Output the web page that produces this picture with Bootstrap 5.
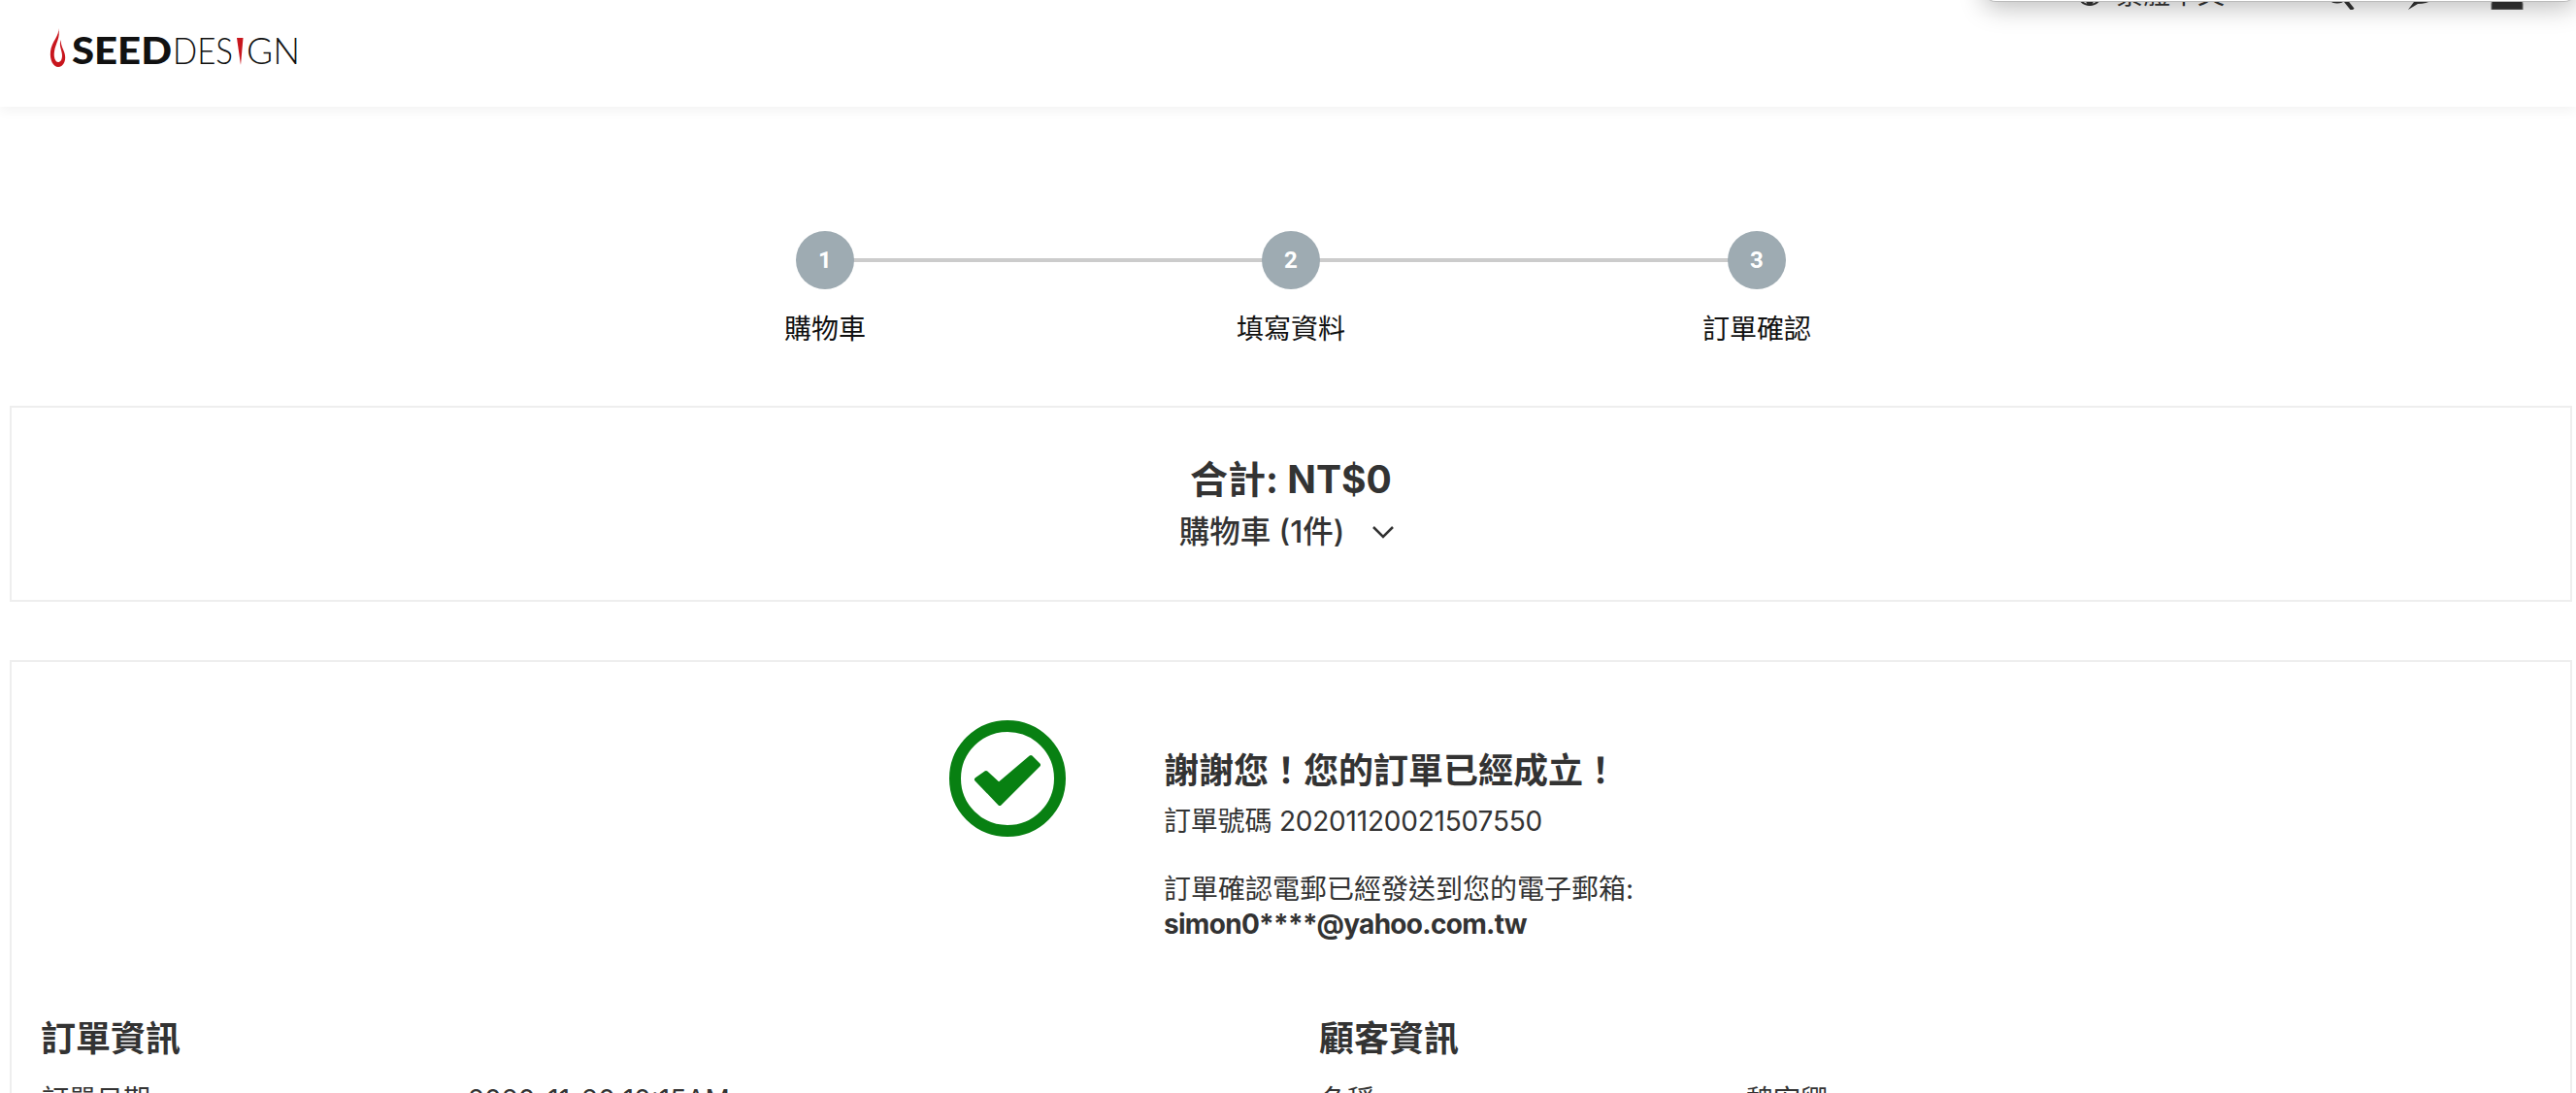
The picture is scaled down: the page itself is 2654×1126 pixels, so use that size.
<!DOCTYPE html>
<html lang="zh-Hant">
<head>
    <meta charset="UTF-8">
    <link href="https://cdn.jsdelivr.net/npm/bootstrap@5.3.3/dist/css/bootstrap.min.css" rel="stylesheet">
    <title>SeedDesign</title>
    <style>
        html, body { height: 1126px; overflow: hidden; }
        body { font-family: Inter, "Noto Sans CJK TC", sans-serif; color: #333; background: #fff; }
        .site-head { height: 110px; background: #fff; box-shadow: 0 4px 12px rgba(0,0,0,.05); position: relative; }
        .logo-wrap { padding: 26px 0 0 50px; }
        .overlay-bar { position: absolute; top: -40px; left: 2044px; right: 0; height: 42px; background: #fff; border-radius: 0 0 12px 12px; border-bottom: 1px solid #bbb; box-shadow: 0 6px 26px rgba(0,0,0,.26); }
        .head-tools { margin-top: -30px; height: 40px; font-size: 28px; line-height: 40px; color: #333; padding-right: 54px; }
        .tool-lang { margin: 0 103px -4px 0; }
        .tool-globe { margin: 0 15px 3px 0; }
        .tool-search { margin-right: 52px; }
        .tool-chat { margin-right: 53px; }
        .page-main { padding: 0 4px 0 10px; }
        .step-row { width: 1440px; margin: 128px auto 0; display: grid; grid-template-columns: repeat(3, 1fr); }
        .step-box { position: relative; }
        .step-line { position: absolute; top: 28px; left: 50%; width: 100%; height: 4px; background: #ccc; }
        .step-num { width: 60px; height: 60px; border-radius: 50%; background: #9eabb2; color: #fff; font-family: Roboto, sans-serif; font-weight: 700; font-size: 24px; position: relative; z-index: 1; }
        .step-label { margin-top: 21px; font-size: 28px; line-height: 40px; color: #111; white-space: nowrap; }
        .total-box { height: 202px; margin-top: 59px; padding-top: 51px; border: 2px solid #eee; }
        .total-amt { font-size: 39px; font-weight: 700; line-height: 46px; }
        .cart-toggle { margin-top: 11px; font-size: 31.500px; font-weight: 500; line-height: 40px; gap: 28px; padding-right: 8px; }
        .order-box { margin-top: 60px; border: 2px solid #eee; height: 700px; padding: 60px 0 0 31px; }
        .thanks-row { padding-left: 935px; gap: 102px; }
        .thanks-body { margin-top: 30px; }
        .thanks-title { font-size: 36px; font-weight: 700; line-height: 44px; margin-left: -1px; }
        .thanks-no { margin-top: 12px; font-size: 28px; line-height: 36px; letter-spacing: -.2px; margin-left: -1px; }
        .thanks-text { margin-top: 33px; font-size: 28px; line-height: 38px; margin-left: -1px; }
        .thanks-mail { font-size: 28px; line-height: 34px; font-weight: 700; letter-spacing: -.7px; margin-left: -1px; }
        .info-wrap { margin-top: 78px; }
        .info-col { width: 1317px; flex: none; }
        .info-title { font-size: 36px; font-weight: 700; line-height: 46px; margin: 0 0 0 -1px; color: #333; }
        .info-line { font-size: 28px; line-height: 40px; margin-top: 20px; }
        .info-key { width: 439px; flex: none; }
    </style>
</head>
<body>
    <header class="site-head d-flex justify-content-between align-items-start">
        <div class="logo-wrap">
            <svg class="d-block" width="262" height="58" viewBox="0 0 262 58" role="img" aria-label="SeedDesign">
                <path d="M10 3C12 10 3 17 2 27C1 36 5 43 10 43C15 43 18 37 17 31C16 25 12 21 13 15C10 20 14 26 14 31C14 36 12 38 10 38C7 38 5 33 6 27C7 19 13 12 10 3Z" fill="#c8161d"/>
                <text x="24" y="40" font-family="Lato, sans-serif" font-weight="900" font-size="38" fill="#111" textLength="103" lengthAdjust="spacingAndGlyphs">SEED</text>
                <text x="128" y="40" font-family="Lato, sans-serif" font-weight="300" font-size="38" fill="#111" textLength="62" lengthAdjust="spacingAndGlyphs">DES</text>
                <path d="M194 13H200.500L198 41Z" fill="#c8161d"/>
                <text x="204" y="40" font-family="Lato, sans-serif" font-weight="300" font-size="38" fill="#111" textLength="55" lengthAdjust="spacingAndGlyphs">GN</text>
            </svg>
        </div>
        <div class="head-tools d-flex align-items-end">
            <svg class="tool-globe" width="24" height="28" viewBox="0 0 24 28"><circle cx="12" cy="14" r="12" fill="none" stroke="#333" stroke-width="2"/><ellipse cx="12" cy="14" rx="5" ry="13" fill="#333"/></svg>
            <span class="tool-lang">繁體中文</span>
            <svg class="tool-search" width="32" height="36" viewBox="0 -5 32 36"><circle cx="13" cy="12" r="11" fill="none" stroke="#333" stroke-width="3"/><path d="M21 21L29 31" stroke="#333" stroke-width="4"/></svg>
            <svg class="tool-chat" width="34" height="36" viewBox="0 -4 34 36"><path d="M2 32L8 24C3 20 1 16 2 11C4 3 12 1 18 1C26 1 32 6 32 13C32 21 23 26 12 26Z" fill="#333"/></svg>
            <svg width="34" height="36" viewBox="0 -4 34 36"><path d="M1 32V26C1 21 8 19 17 19C26 19 33 21 33 26V32Z" fill="#333" stroke="#777" stroke-width="1"/></svg>
        </div>
        <div class="overlay-bar"></div>
    </header>

    <main class="page-main">
        <div class="step-row">
            <div class="step-box d-flex flex-column align-items-center">
                <div class="step-line"></div>
                <div class="step-num d-flex align-items-center justify-content-center">1</div>
                <div class="step-label">購物車</div>
            </div>
            <div class="step-box d-flex flex-column align-items-center">
                <div class="step-line"></div>
                <div class="step-num d-flex align-items-center justify-content-center">2</div>
                <div class="step-label">填寫資料</div>
            </div>
            <div class="step-box d-flex flex-column align-items-center">
                <div class="step-num d-flex align-items-center justify-content-center">3</div>
                <div class="step-label">訂單確認</div>
            </div>
        </div>

        <section class="total-box text-center">
            <div class="total-amt">合計: NT$0</div>
            <div class="cart-toggle d-flex justify-content-center align-items-center">
                <span>購物車 (1件)</span>
                <svg width="24" height="14" viewBox="0 0 24 14"><path d="M2 2L12 12L22 2" fill="none" stroke="#333" stroke-width="2.500"/></svg>
            </div>
        </section>

        <section class="order-box">
            <div class="thanks-row d-flex">
                <svg class="flex-shrink-0" width="120" height="120" viewBox="0 0 120 120">
                    <circle cx="60" cy="60" r="54" fill="none" stroke="#088012" stroke-width="12"/>
                    <path d="M38 54L51 66L84 38L92 46L52 86L28 61Z" fill="#088012" stroke="#088012" stroke-width="4" stroke-linejoin="round"/>
                </svg>
                <div class="thanks-body">
                    <div class="thanks-title">謝謝您！您的訂單已經成立！</div>
                    <div class="thanks-no">訂單號碼 20201120021507550</div>
                    <div class="thanks-text">訂單確認電郵已經發送到您的電子郵箱:</div>
                    <div class="thanks-mail">simon0****@yahoo.com.tw</div>
                </div>
            </div>
            <div class="info-wrap d-flex">
                <div class="info-col">
                    <h2 class="info-title">訂單資訊</h2>
                    <div class="info-line d-flex">
                        <div class="info-key">訂單日期</div>
                        <div>2020-11-20 10:15AM</div>
                    </div>
                </div>
                <div class="info-col">
                    <h2 class="info-title">顧客資訊</h2>
                    <div class="info-line d-flex">
                        <div class="info-key">名稱</div>
                        <div>魏宏卿</div>
                    </div>
                </div>
            </div>
        </section>
    </main>
</body>
</html>
